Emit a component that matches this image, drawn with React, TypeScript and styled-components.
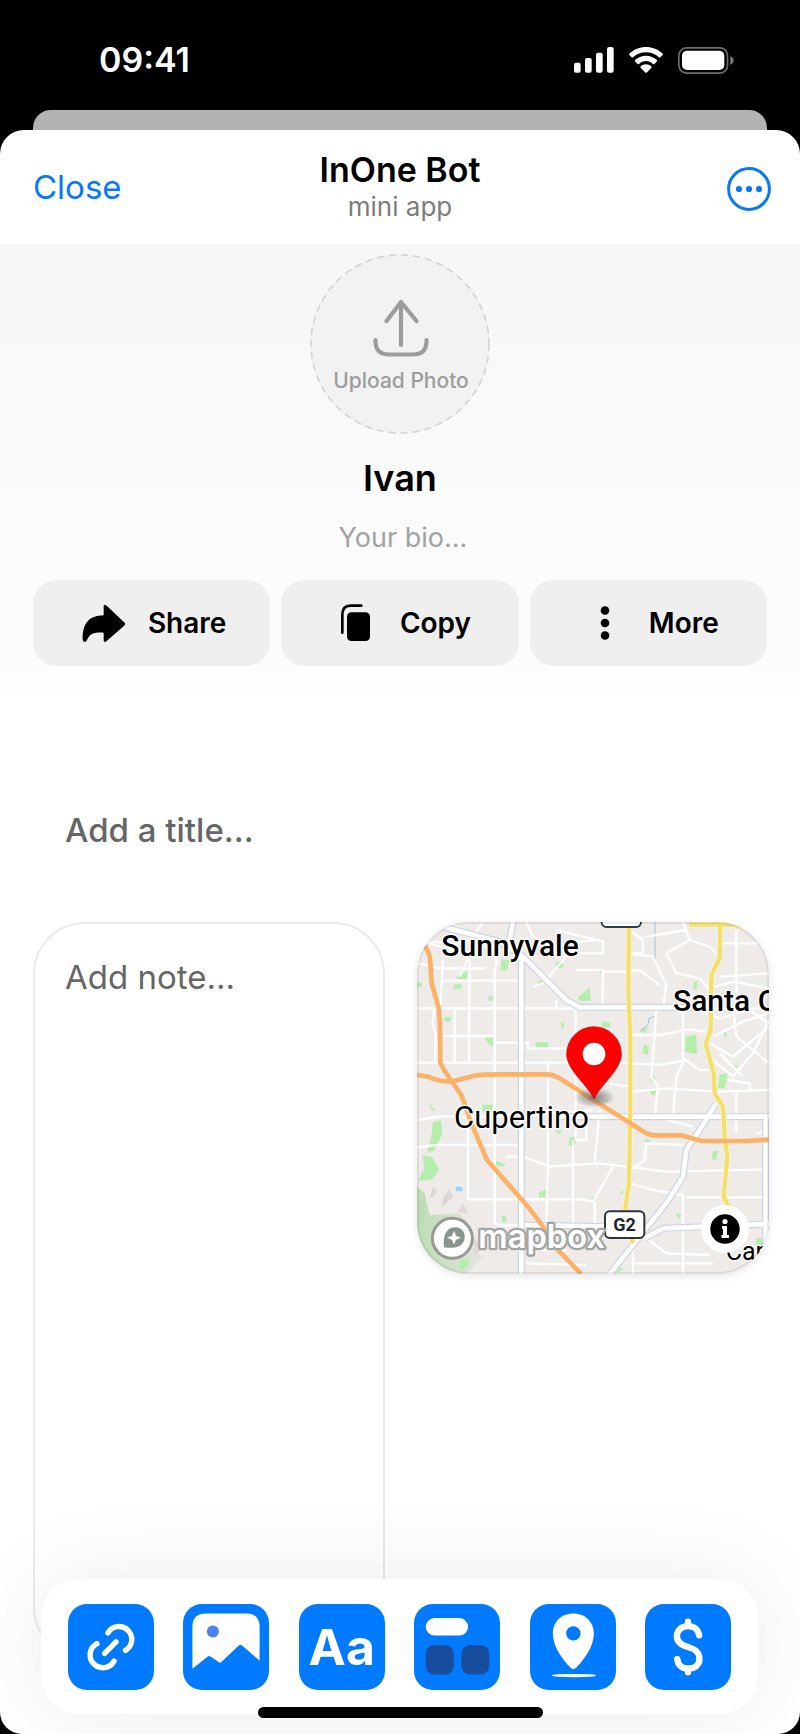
import React from "react";
import styled, { createGlobalStyle } from "styled-components";

const GlobalStyle = createGlobalStyle`
  *, *::before, *::after { box-sizing: border-box; }
  html, body { margin: 0; padding: 0; background: #000; }
  body {
    font-family: Inter, "Liberation Sans", sans-serif;
    color: #000;
    -webkit-font-smoothing: antialiased;
  }
  button, input, textarea { font-family: inherit; margin: 0; }
  svg { display: block; }
`;

const Screen = styled.div`
  min-height: 100vh;
  display: flex;
  flex-direction: column;
  background: #000;
`;

const StatusBar = styled.div`
  height: 110px;
  padding: 10px 66px 0 99px;
  display: flex;
  align-items: center;
  justify-content: space-between;
  color: #fff;
`;

const Clock = styled.time`
  font-size: 34px;
  line-height: 40px;
  font-weight: 600;
`;

const StatusIcons = styled.div`
  display: flex;
  align-items: center;
  gap: 15px;
`;

const BackSheet = styled.div`
  height: 20px;
  margin: 0 33px;
  border-radius: 18px 18px 0 0;
  background: #b2b2b1;
`;

const Sheet = styled.div`
  flex: 1;
  display: flex;
  flex-direction: column;
  background: #fff;
  border-radius: 24px 24px 22px 22px;
  overflow: hidden;
`;

const Header = styled.header`
  height: 114px;
  padding: 0 29px;
  display: grid;
  grid-template-columns: 1fr auto 1fr;
  align-items: center;
`;

const PlainButton = styled.button`
  border: 0;
  padding: 0;
  background: none;
  color: #047af8;
  cursor: pointer;
`;

const CloseButton = styled(PlainButton)`
  justify-self: start;
  padding-left: 4px;
  font-size: 33px;
  line-height: 40px;
`;

const MenuButton = styled(PlainButton)`
  justify-self: end;
  padding-top: 4px;
`;

const Titles = styled.div`
  text-align: center;
`;

const AppName = styled.div`
  font-size: 34px;
  line-height: 40px;
  font-weight: 600;
`;

const AppKind = styled.div`
  font-size: 26px;
  line-height: 34px;
  color: #7c7c7c;
`;

const Hero = styled.section`
  padding: 10px 33px 30px;
  display: flex;
  flex-direction: column;
  align-items: center;
  background: linear-gradient(#f7f7f7, #fdfdfd);
`;

const AvatarButton = styled.button`
  position: relative;
  width: 180px;
  height: 180px;
  padding: 4px 0 0 2px;
  border: 0;
  border-radius: 50%;
  background: #f2f2f2;
  color: #9c9c9c;
  display: flex;
  flex-direction: column;
  align-items: center;
  justify-content: center;
  gap: 12px;
  font-size: 21px;
  line-height: 24px;
  font-weight: 500;
  white-space: nowrap;
  cursor: pointer;
`;

const DashedRing = styled.svg`
  position: absolute;
  inset: 0;
`;

const UserName = styled.h1`
  margin: 22px 0 0;
  font-size: 36px;
  line-height: 44px;
  font-weight: 600;
`;

const BioInput = styled.input`
  width: 100%;
  height: 36px;
  margin-top: 19px;
  padding: 0 0 0 6px;
  border: 0;
  outline: 0;
  background: none;
  text-align: center;
  font-size: 27px;
  &::placeholder { color: #a2a2a4; opacity: 1; }
`;

const Actions = styled.div`
  width: 100%;
  margin-top: 25px;
  display: grid;
  grid-template-columns: repeat(3, 1fr);
  gap: 11px;
`;

const ActionButton = styled.button`
  height: 86px;
  border: 0;
  border-radius: 24px;
  padding: 0 0 0 5px;
  background: #efefef;
  color: #000;
  display: flex;
  align-items: center;
  justify-content: center;
  gap: 22px;
  font-size: 28px;
  line-height: 36px;
  font-weight: 600;
  cursor: pointer;
`;

const Board = styled.main`
  flex: 1;
  padding: 112px 31px 75px 33px;
`;

const TitleInput = styled.input`
  display: block;
  width: 100%;
  height: 44px;
  padding: 0 32px;
  border: 0;
  outline: 0;
  background: none;
  font-size: 33px;
  font-weight: 500;
  &::placeholder { color: #666; opacity: 1; }
`;

const Widgets = styled.div`
  margin-top: 70px;
  display: grid;
  grid-template-columns: 1fr 1fr;
  gap: 32px;
  align-items: start;
`;

const NoteCard = styled.textarea`
  display: block;
  width: 100%;
  height: 737px;
  padding: 31px 30px;
  border: 2px solid #ebebeb;
  border-radius: 52px;
  outline: 0;
  resize: none;
  background: #fff;
  font-size: 33px;
  line-height: 44px;
  &::placeholder { color: #666; opacity: 1; }
`;

const MapCard = styled.div`
  position: relative;
  aspect-ratio: 1;
  border-radius: 52px;
  overflow: hidden;
  background: #eeebe9;
  box-shadow: 0 2px 8px rgba(0, 0, 0, 0.1);
`;

const MapOutline = styled.div`
  position: absolute;
  inset: 0;
  border: 2px solid rgba(0, 0, 0, 0.07);
  border-radius: 52px;
  pointer-events: none;
`;

const InfoButton = styled.button`
  position: absolute;
  right: 20px;
  bottom: 21px;
  width: 48px;
  height: 48px;
  padding: 9px;
  border: 0;
  border-radius: 50%;
  background: #fff;
  cursor: pointer;
`;

const Dock = styled.nav`
  position: fixed;
  left: 41px;
  right: 42px;
  bottom: 20px;
  height: 135px;
  padding: 0 27px;
  display: flex;
  align-items: center;
  justify-content: space-between;
  border-radius: 38px;
  background: #fff;
  box-shadow: 0 0 90px rgba(0, 0, 0, 0.08);
`;

const DockButton = styled.button`
  width: 86px;
  height: 86px;
  padding: 0;
  border: 0;
  border-radius: 19px;
  background: #007aff;
  color: #fff;
  font-size: 50px;
  line-height: 86px;
  font-weight: 700;
  overflow: hidden;
  cursor: pointer;
`;

const HomeIndicator = styled.div`
  position: fixed;
  left: 50%;
  bottom: 16px;
  width: 285px;
  height: 11px;
  margin-left: -142px;
  border-radius: 6px;
  background: #000;
`;

const Signal = () => (
  <svg width="40" height="26" viewBox="0 0 120 78" fill="#fff" aria-hidden="true">
    <rect x="0" y="47" width="20" height="30" rx="6" />
    <rect x="33" y="33" width="20" height="44" rx="6" />
    <rect x="66" y="17" width="20" height="60" rx="6" />
    <rect x="99" y="0" width="20" height="77" rx="6" />
  </svg>
);

const Wifi = () => (
  <svg width="34" height="26" viewBox="0 0 102 78" fill="#fff" aria-hidden="true">
    <path d="M51 0C32 0 15 7 2 19Q-1 22 2 25L8 31Q10 33 13 30C23 21 36 16 51 16C66 16 79 21 89 30Q92 33 94 31L100 25Q103 22 100 19C87 7 70 0 51 0Z" />
    <path d="M51 26C38 26 27 31 19 38Q16 41 19 44L26 51Q28 53 31 50C36 45 43 42 51 42C59 42 66 45 71 50Q74 53 76 51L83 44Q86 41 83 38C75 31 64 26 51 26Z" />
    <path d="M51 52C45 52 39 54 35 58Q33 60 35 62L48 76Q51 79 54 76L67 62Q69 60 67 58C63 54 57 52 51 52Z" />
  </svg>
);

const Battery = () => (
  <svg width="56" height="27" viewBox="0 0 168 81" aria-hidden="true">
    <rect x="2.5" y="2.5" width="146" height="76" rx="23" fill="none" stroke="#6c6c6c" strokeWidth="5" />
    <rect x="12" y="11" width="127" height="58" rx="15" fill="#fff" />
    <path d="M157 28C170 33 170 48 157 53Z" fill="#7a7a7a" />
  </svg>
);

const Ellipsis = () => (
  <svg width="44" height="44" viewBox="0 0 44 44" aria-hidden="true">
    <circle cx="22" cy="22" r="20.400" fill="none" stroke="#0a78f5" strokeWidth="3" />
    <circle cx="12" cy="22" r="3.1" fill="#0a78f5" />
    <circle cx="22" cy="22" r="3.1" fill="#0a78f5" />
    <circle cx="32" cy="22" r="3.1" fill="#0a78f5" />
  </svg>
);

const UploadIcon = () => (
  <svg width="56" height="58" viewBox="0 0 56 58" fill="none" stroke="#9c9c9c" strokeWidth="4.2" strokeLinecap="round" strokeLinejoin="round" aria-hidden="true">
    <path d="M28 46V3M13.500 22L28 3L43.500 22" />
    <path d="M2.500 41V43Q3 55.500 16 55.500H40Q53 55.500 53.500 43V41" />
  </svg>
);

const ShareIcon = () => (
  <svg width="44" height="44" viewBox="0 0 132 132" aria-hidden="true">
    <path d="M74 14C68 8 65 12 65 17V43C20 44 2 68 2 113C2 125 12 125 15 117C22 100 34 93 65 95V118C65 123 69 125 74 120L128 73Q132 69 128 65Z" />
  </svg>
);

const CopyIcon = () => (
  <svg width="44" height="44" viewBox="0 0 132 132" aria-hidden="true">
    <path d="M25 95V42Q25 14 49 14H82" fill="none" stroke="#000" strokeWidth="8" strokeLinecap="round" />
    <rect x="39" y="34" width="69" height="86" rx="13" />
  </svg>
);

const DotsIcon = () => (
  <svg width="44" height="44" viewBox="0 0 44 44" aria-hidden="true">
    <circle cx="22" cy="9.500" r="4.300" />
    <circle cx="22" cy="22" r="4.300" />
    <circle cx="22" cy="34.500" r="4.300" />
  </svg>
);

const LinkIcon = () => (
  <svg width="86" height="86" viewBox="0 0 256 256" fill="none" stroke="#fff" strokeWidth="16" strokeLinecap="round" aria-hidden="true">
    <path d="M109 147L143 113" />
    <path d="M119 86A38 38 0 1 1 171 138" />
    <path d="M86 118A38 38 0 1 0 137 170" />
  </svg>
);

const PictureIcon = () => (
  <svg width="86" height="86" viewBox="0 0 256 256" aria-hidden="true">
    <path d="M28 193V68Q28 28 68 28H188Q228 28 228 68V169L175 123Q171 120 167 123L114 173Q110 177 106 173L82 156Q78 153 74 156Z" fill="#fff" />
    <circle cx="89" cy="82" r="18" fill="#4a83ef" />
  </svg>
);

const WidgetIcon = () => (
  <svg width="86" height="86" viewBox="0 0 256 256" aria-hidden="true">
    <rect x="35" y="42" width="126" height="52" rx="26" fill="#fff" />
    <rect x="35" y="122" width="83" height="88" rx="26" fill="#184c9d" />
    <rect x="141" y="122" width="83" height="88" rx="26" fill="#184c9d" />
  </svg>
);

const PlaceIcon = () => (
  <svg width="86" height="86" viewBox="0 0 256 256" aria-hidden="true">
    <path fill="#fff" fillRule="evenodd" d="M129 28C92 28 68 54 68 88C68 128 98 167 121 190Q129 197 137 190C160 167 190 128 190 88C190 54 166 28 129 28ZM129 66A21 21 0 1 1 129 109A21 21 0 1 1 129 66Z" />
    <ellipse cx="131" cy="213" rx="66" ry="5" fill="#fff" />
  </svg>
);

const MoneyIcon = () => (
  <svg width="86" height="86" viewBox="0 0 256 256" fill="none" stroke="#fff" strokeWidth="19" strokeLinecap="round" aria-hidden="true">
    <path d="M161 93C158 76 146 66 128 66C108 66 95 79 95 96C95 116 110 123 128 128C148 134 162 142 162 163C162 182 148 192 128 192C110 192 98 182 96 164" />
    <path d="M128 53V64M128 194V203" />
  </svg>
);

const minorRoads = [
  "M52 295H1108", "M52 458H690", "M130 212H360", "M52 160L120 175H260", "M52 90L160 120L210 130L208 458",
  "M130 150L122 290M104 300L98 340L108 370L106 458", "M165 295V458M285 170V940L300 946H440",
  "M52 630L120 620H360L580 600", "M52 712L110 705H360M205 600V868H540L580 875L640 770",
  "M320 740H370L450 770L600 760L700 772L800 785L1108 778", "M445 460V760L440 940",
  "M528 290V690H560V640M520 690V940M600 600L585 755M585 875V940", "M285 378H130M285 398H385V415H500",
  "M528 180L610 180L608 290M470 295V270", "M610 185H690L720 180L780 225M690 130L760 140L800 225L790 290",
  "M850 300V458L830 500L820 620", "M690 375H780L870 358L920 365", "M770 300L765 370L755 500L775 530L765 620L880 650",
  "M690 460L780 465L860 450L900 480H930", "M700 545L800 535L960 545L1108 540", "M620 520L690 530",
  "M690 820L760 840L850 855V1092", "M700 775L735 750L740 700L850 705M860 862H1108", "M700 990V1092",
  "M735 980L800 1030L930 1035M700 1060H940", "M960 200L1108 190M930 235L1000 215L1108 235", "M690 60L730 90V130H690",
  "M850 36L870 90L930 110L960 140M740 80L860 60", "M870 90L800 130L830 190L900 205L930 240", "M1010 60V250M970 100H1108",
  "M940 380L1030 335L1108 310M930 400L1000 440L1108 350M1000 290L1010 380L1108 460", "M960 430L1030 500",
  "M985 510L1050 520V545M1010 545V670M1070 670L1108 665", "M940 450L1000 500L1060 430L1108 330",
  "M890 300L960 325L1050 300L1108 340", "M600 90L540 95L430 220L400 230M470 60L610 95V130H540",
  "M250 40L200 100L60 95M150 36L230 90L180 200M230 90L290 130V170M380 36L400 80L480 120",
  "M380 1060L560 1065M380 1020L500 1020",
];

const highways = [
  "M365 150V1092", "M340 36L330 90L365 150L380 150", "M130 50L300 95L370 140L500 270L540 292H850L930 292",
  "M470 620H1108", "M950 580L900 660L860 720L850 800L800 880L630 1092", "M375 945L620 950M735 985L790 955L1108 942", "M1098 620V1092",
];

const yellowRoads = [
  "M688 46L686 250L692 380L692 600L688 820L676 900", "M868 44H1010L1108 80",
  "M962 44L960 145L935 195L933 360L918 402L942 490L945 550L970 590L975 680L983 740L972 860L988 890", "M696 985L700 1000",
];

const greens = [
  "M305 148L328 150L322 182L303 180Z", "M180 190L205 184L200 210L170 208Z", "M162 224L184 222V236H162Z",
  "M470 155L492 160L488 176L468 172Z", "M412 215L438 208L425 228Z", "M535 262L570 234L574 272L540 272Z",
  "M590 178L606 176V192Z", "M255 382H282V410L266 402Z", "M408 397H446V412H408Z", "M484 336L494 340L492 355L484 350Z",
  "M606 334L632 338V352L606 350Z", "M732 405L748 410L744 435L730 430Z", "M858 380L890 374L892 432L856 425Z",
  "M726 354L744 352L740 368L722 366Z", "M884 216L894 214L890 240L880 235Z", "M135 322L155 320L152 334L134 334Z",
  "M248 584H280L276 606L248 604Z", "M100 636L124 630L128 670L105 720L82 728L95 680Z", "M68 736L98 742L118 780L98 808L56 812L74 774Z",
  "M510 682L534 678L524 710L506 706Z", "M290 752L318 764L310 770L288 766Z", "M418 848L438 838V862L418 862Z",
  "M572 862L590 860L588 874Z", "M735 686L752 692L738 704Z", "M940 724L954 722L950 750L936 748Z",
  "M754 536L770 540L764 558L750 548Z", "M758 496L766 500L762 518L752 512Z", "M960 494L984 490L975 535L955 535Z",
  "M1000 466L1014 464L1012 476Z", "M970 366L982 368L978 386Z", "M828 908L846 916L836 926Z", "M306 918H320V936H308Z",
  "M658 846L670 842V854Z", "M90 580L104 600L96 602Z", "M1070 985H1088V1005H1068Z", "M180 1050L210 1046L200 1075L180 1080Z",
  "M655 1072L674 1076L650 1090Z", "M266 256L280 262V272H268Z", "M590 570H632L620 580Z", "M466 660L486 662L480 674Z", "M52 218L66 218V230H52Z",
];

const MapView = () => (
  <svg width="100%" height="100%" viewBox="52 36 1056 1056" fill="none" role="img" aria-label="Map of Cupertino">
    <defs>
      <radialGradient id="pinShade">
        <stop offset="0" stopColor="#444" stopOpacity="0.65" />
        <stop offset="0.6" stopColor="#666" stopOpacity="0.35" />
        <stop offset="1" stopColor="#666" stopOpacity="0" />
      </radialGradient>
      <linearGradient id="hills" x1="0" x2="1">
        <stop offset="0" stopColor="#bcdcb4" />
        <stop offset="1" stopColor="#e6e6df" />
      </linearGradient>
    </defs>
    <rect x="52" y="36" width="1056" height="1056" fill="#eeebe9" />
    <path d="M52 830L75 850L90 915L180 910L215 950L205 1000L250 1040L200 1092H52Z" fill="url(#hills)" />
    <path d="M100 830L115 845L90 868ZM150 835L160 860L125 895L130 865ZM190 880L205 910L175 905ZM220 980L250 1010L225 1040Z" fill="#dfd9d5" />
    {greens.map((d) => <path key={d} d={d} fill="#b4edac" />)}
    <path d="M168 830H188V844H168Z" fill="#9ad4f7" />
    <path d="M766 36V150M770 318L748 325L745 345L722 362" stroke="#9cc6ea" strokeWidth="3" />
    <g stroke="#fff" strokeWidth="7" strokeLinejoin="round">
      {minorRoads.map((d) => <path key={d} d={d} />)}
    </g>
    <g stroke="#cdd3e3" strokeWidth="21" strokeLinejoin="round">
      {highways.map((d) => <path key={d} d={d} />)}
    </g>
    <g stroke="#fff" strokeWidth="14" strokeLinejoin="round">
      {highways.map((d) => <path key={d} d={d} />)}
    </g>
    <g stroke="#fdf8dc" strokeWidth="17" strokeLinejoin="round">
      {yellowRoads.map((d) => <path key={d} d={d} />)}
    </g>
    <g stroke="#f4df6c" strokeWidth="13" strokeLinejoin="round">
      {yellowRoads.map((d) => <path key={d} d={d} />)}
    </g>
    <g stroke="#fcb168" strokeWidth="14" strokeLinejoin="round">
      <path d="M76 108Q92 130 92 160L96 220L116 290Q122 320 122 458Q132 480 150 505L185 555L215 640L262 750L385 890L430 950L465 1010L545 1092" />
      <path d="M52 495L85 500Q130 520 165 512L230 496Q260 493 300 493H420Q450 490 475 502L550 550L730 664Q745 675 770 676H845L905 693H1040L1108 689" />
    </g>
    <ellipse cx="585" cy="562" rx="62" ry="30" fill="url(#pinShade)" />
    <path d="M583 566C560 520 501 480 501 432A82 82 0 0 1 665 432C665 480 606 520 583 566Z" fill="#fe0000" stroke="#b80d0d" strokeWidth="2" />
    <circle cx="583" cy="432" r="34" fill="#fff" />
    <rect x="606" y="4" width="118" height="47" rx="14" fill="#fff" stroke="#353a45" strokeWidth="6" />
    <g fontFamily="Roboto, sans-serif" fontSize="90" fill="#000" stroke="#fff" strokeWidth="8" strokeLinejoin="round" style={{ paintOrder: "stroke" }}>
      <text x="125" y="137" fontWeight="500">Sunnyvale</text>
      <text x="820" y="303" fontWeight="500">Santa C</text>
      <text x="163" y="654" fontSize="93" fontWeight="400">Cupertino</text>
      <text x="978" y="1050" fontSize="75" fontWeight="400">Car</text>
    </g>
    <rect x="616" y="904" width="118" height="80" rx="14" fill="#fff" stroke="#30333d" strokeWidth="6" />
    <text x="675" y="963" textAnchor="middle" fontFamily="Roboto, sans-serif" fontSize="54" fontWeight="700" fill="#20242e">G2</text>
    <circle cx="158" cy="985" r="60" fill="#fff" stroke="#979b96" strokeWidth="9" />
    <path d="M133 1012C128 970 145 952 165 952C186 952 197 966 195 984C193 1006 172 1018 133 1012Z" fill="#89958a" />
    <path d="M163 962L169 977L184 983L169 989L163 1004L157 989L142 983L157 977Z" fill="#fff" />
    <text x="236" y="1013" fontFamily="Inter, sans-serif" fontSize="98" fontWeight="600" fill="#fff" stroke="#a3a5a4" strokeWidth="14" strokeLinejoin="round" style={{ paintOrder: "stroke" }}>mapbox</text>
  </svg>
);

const InfoIcon = () => (
  <svg width="30" height="30" viewBox="0 0 30 30" aria-hidden="true">
    <circle cx="15" cy="15" r="14.700" />
    <circle cx="15" cy="7.500" r="2.600" fill="#fff" />
    <path d="M12 12H17V21H19V24H11.500V21H13V15H12Z" fill="#fff" />
  </svg>
);

const actions = [
  { label: "Share", icon: <ShareIcon /> },
  { label: "Copy", icon: <CopyIcon /> },
  { label: "More", icon: <DotsIcon /> },
];

const tools = [
  { name: "Add link", content: <LinkIcon /> },
  { name: "Add picture", content: <PictureIcon /> },
  { name: "Add text", content: "Aa" },
  { name: "Add widget", content: <WidgetIcon /> },
  { name: "Add place", content: <PlaceIcon /> },
  { name: "Add payment", content: <MoneyIcon /> },
];

export default function App() {
  return (
    <Screen>
      <GlobalStyle />
      <StatusBar>
        <Clock>09:41</Clock>
        <StatusIcons>
          <Signal />
          <Wifi />
          <Battery />
        </StatusIcons>
      </StatusBar>
      <BackSheet />
      <Sheet>
        <Header>
          <CloseButton type="button">Close</CloseButton>
          <Titles>
            <AppName>InOne Bot</AppName>
            <AppKind>mini app</AppKind>
          </Titles>
          <MenuButton type="button" aria-label="Menu"><Ellipsis /></MenuButton>
        </Header>
        <Hero>
          <AvatarButton type="button">
            <DashedRing width="180" height="180" viewBox="0 0 180 180" aria-hidden="true">
              <circle cx="90" cy="90" r="89" fill="none" stroke="#d3d3d3" strokeWidth="1.6" strokeDasharray="7 5" />
            </DashedRing>
            <UploadIcon />
            Upload Photo
          </AvatarButton>
          <UserName>Ivan</UserName>
          <BioInput aria-label="Bio" placeholder="Your bio..." />
          <Actions>
            {actions.map((a) => (
              <ActionButton key={a.label} type="button">
                {a.icon}
                {a.label}
              </ActionButton>
            ))}
          </Actions>
        </Hero>
        <Board>
          <TitleInput aria-label="Title" placeholder="Add a title..." />
          <Widgets>
            <NoteCard aria-label="Note" placeholder="Add note..." />
            <MapCard>
              <MapView />
              <MapOutline />
              <InfoButton type="button" aria-label="Map information"><InfoIcon /></InfoButton>
            </MapCard>
          </Widgets>
        </Board>
      </Sheet>
      <Dock aria-label="Add block">
        {tools.map((t) => (
          <DockButton key={t.name} type="button" aria-label={t.name}>{t.content}</DockButton>
        ))}
      </Dock>
      <HomeIndicator />
    </Screen>
  );
}
